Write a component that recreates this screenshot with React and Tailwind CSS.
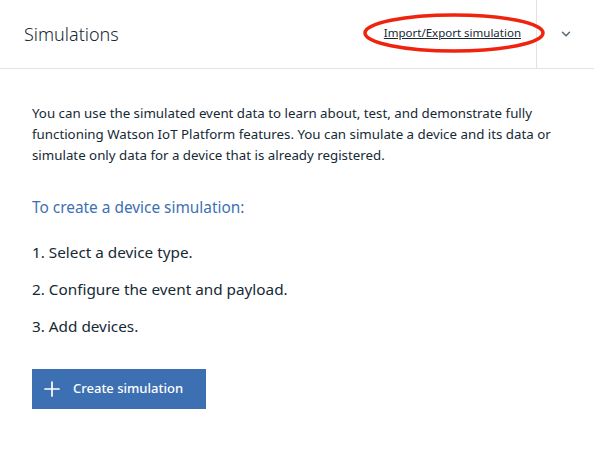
import { ChevronDown, Plus } from 'lucide-react';

const steps = ['Select a device type.', 'Configure the event and payload.', 'Add devices.'];

export default function App() {
  return (
    <div className="w-[594px] h-[461px] bg-white text-[#152935] overflow-hidden" style={{ fontFamily: '"Noto Sans", "Liberation Sans", sans-serif' }}>
      {/* header */}
      <div className="relative flex h-[69px] border-b border-[#dfe3e6]">
        <div className="flex flex-1 items-center pl-6 pr-[15px]">
          <h1 className="text-[18px] font-light text-[#152935]">Simulations</h1>
          <a href="#" className="ml-auto -mt-[2px] text-[11.5px] underline text-[#152935]">Import/Export simulation</a>
        </div>
        <div className="flex w-[58px] items-center justify-center border-l border-[#dfe3e6]">
          <ChevronDown size={14} strokeWidth={2.5} className="text-[#5a6872]" />
        </div>
        {/* red annotation ring */}
        <svg className="absolute left-[362px] top-[12px] pointer-events-none" width="184" height="42" viewBox="0 0 184 42">
          <ellipse cx="92" cy="21" rx="89" ry="18" fill="none" stroke="#f0240e" strokeWidth="3.5" />
        </svg>
      </div>

      {/* body */}
      <div className="px-8 pt-[34px]">
        <p className="text-[13.3px] leading-[21px] max-w-[535px]">
          You can use the simulated event data to learn about, test, and demonstrate fully functioning Watson IoT Platform features. You can simulate a device and its data or simulate only data for a device that is already registered.
        </p>
        <h2 className="mt-[30px] text-[15.4px] text-[#3d70b2]">To create a device simulation:</h2>
        <ol className="mt-[22px] flex flex-col gap-[14px] text-[15.3px]">
          {steps.map((s, i) => (
            <li key={i}>{i + 1}. {s}</li>
          ))}
        </ol>
        <button className="mt-[31px] flex h-[40px] w-[174px] items-center bg-[#3d70b2] pl-[8px] text-white">
          <Plus size={24} strokeWidth={1.7} />
          <span className="ml-[9px] text-[13px] font-medium">Create simulation</span>
        </button>
      </div>
    </div>
  );
}
